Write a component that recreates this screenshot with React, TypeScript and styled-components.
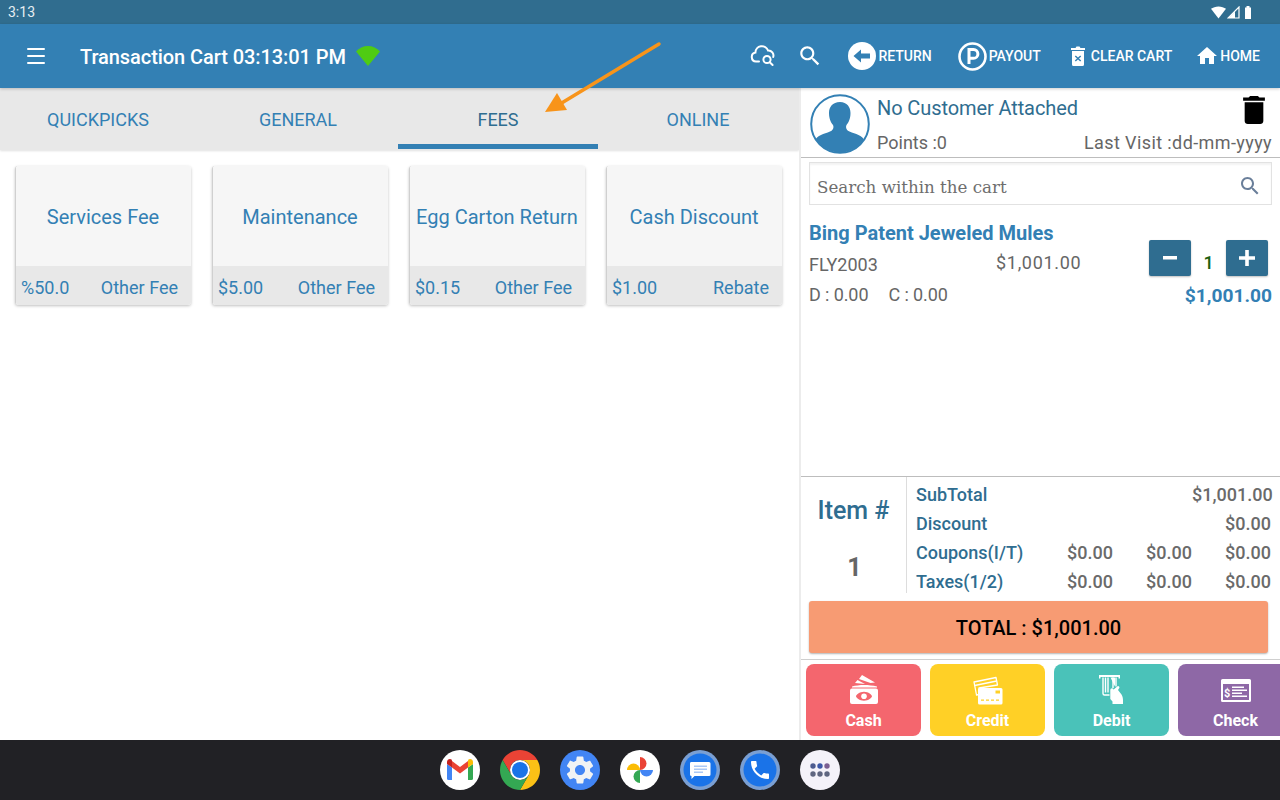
import React from 'react';
import styled, { createGlobalStyle } from 'styled-components';
import { Menu } from 'lucide-react';

const Global = createGlobalStyle`
  html, body { margin: 0; padding: 0; background: #fff; }
  * { box-sizing: border-box; }
  body { font-family: Roboto, "Liberation Sans", sans-serif; }
`;

const BLUE = '#3380b4';
const DEEP = '#2f6d90';
const GREY = '#666666';

const Screen = styled.div`
  position: relative;
  width: 1280px;
  height: 800px;
  display: flex;
  flex-direction: column;
  overflow: hidden;
`;
const StatusBar = styled.div`
  height: 24px;
  background: #306d8f;
  color: #e6edf2;
  font-size: 14px;
  display: flex;
  align-items: center;
  justify-content: space-between;
  padding: 0 25px 0 8px;
`;
const StatusIcons = styled.div`
  display: flex;
  align-items: center;
  gap: 1px;
`;
const Header = styled.header`
  height: 64px;
  background: ${BLUE};
  color: #fff;
  display: flex;
  align-items: center;
  padding: 0 20px 0 24px;
  box-shadow: 0 1px 3px rgba(0,0,0,.2);
  z-index: 2;
`;
const Title = styled.div`
  margin-left: 32px;
  font-size: 20px;
  letter-spacing: -0.07px;
  font-weight: 500;
  display: flex;
  align-items: center;
  gap: 9px;
  flex: 1;
  padding-top: 2px;
`;
const WifiMark = styled.svg`
  margin-top: -2px;
`;
const Actions = styled.div`
  display: flex;
  align-items: center;
`;
const Action = styled.div<{ $ml: number; $gap?: number }>`
  display: flex;
  align-items: center;
  gap: ${p => p.$gap ?? 2}px;
  margin-left: ${p => p.$ml}px;
  font-size: 14px;
  font-weight: 500;
`;
const Body = styled.div`
  flex: 1;
  display: flex;
  min-height: 0;
`;
const LeftPane = styled.section`
  width: 799px;
  flex: none;
`;
const Tabs = styled.nav`
  height: 62px;
  background: #e8e8e8;
  display: flex;
  box-shadow: 0 1px 2px rgba(0,0,0,.12);
  overflow: hidden;
`;
const Tab = styled.div<{ $active?: boolean }>`
  width: 200px;
  flex: none;
  display: flex;
  align-items: center;
  justify-content: center;
  height: 61px;
  padding-top: 6px;
  font-size: 18px;
  color: ${p => (p.$active ? DEEP : BLUE)};
  border-bottom: 5px solid ${p => (p.$active ? BLUE : 'transparent')};
  &:first-child { margin-left: -2px; }
`;
const CardGrid = styled.div`
  display: grid;
  grid-template-columns: repeat(4, 176px);
  gap: 21px;
  padding: 16px 0 0 15px;
`;
const Card = styled.article`
  height: 139px;
  border-radius: 3px;
  overflow: hidden;
  border-left: 1px solid #d0d0d0;
  box-shadow: 0 1px 3px rgba(0,0,0,.25);
  display: flex;
  flex-direction: column;
  color: ${BLUE};
`;
const CardName = styled.div`
  height: 100px;
  background: #f6f6f6;
  display: flex;
  align-items: center;
  justify-content: center;
  font-size: 20px;
  padding: 2px 1px 0 0;
`;
const CardFoot = styled.div`
  flex: 1;
  background: #e8e8e8;
  display: flex;
  align-items: center;
  justify-content: space-between;
  padding: 3px 13px 0 5px;
  font-size: 18px;
`;
const RightPane = styled.section`
  flex: 1;
  min-width: 0;
  border-left: 2px solid #ececec;
  display: flex;
  flex-direction: column;
`;
const Customer = styled.div`
  height: 70px;
  border-bottom: 1px solid #bdbdbd;
  display: flex;
  padding: 6px 8px 0 9px;
  gap: 7px;
`;
const CustomerInfo = styled.div`
  flex: 1;
  display: flex;
  flex-direction: column;
`;
const CustomerTop = styled.div`
  display: flex;
  justify-content: space-between;
  align-items: flex-start;
  color: ${DEEP};
  font-size: 20px;
  letter-spacing: -0.1px;
  height: 37px;
  line-height: 28px;
  padding-right: 6px;
`;
const CustomerBottom = styled.div`
  display: flex;
  justify-content: space-between;
  color: ${GREY};
  font-size: 18px;
  line-height: 24px;
`;
const LastVisit = styled.span`
  letter-spacing: 0.4px;
`;
const TrashMark = styled.svg`
  margin-top: 2px;
`;
const SearchBox = styled.div`
  margin: 4px 8px 0 8px;
  height: 43px;
  border: 1px solid #e2e2e2;
  box-shadow: inset 0 2px 2px rgba(0,0,0,.05);
  display: flex;
  align-items: center;
  justify-content: space-between;
  padding: 4px 9px 0 7px;
  color: #6e6e6e;
  font-family: "DejaVu Serif", serif;
  font-size: 16.7px;
`;
const SearchLabel = styled.span`
  padding-top: 2px;
`;
const Line = styled.div`
  position: relative;
  margin: 15px 8px 0 8px;
  height: 91px;
  display: grid;
  grid-template-columns: 340px 1fr;
`;
const LineMain = styled.div`
  display: flex;
  flex-direction: column;
`;
const LineName = styled.div`
  color: ${BLUE};
  font-size: 20px;
  font-weight: 700;
  line-height: 26px;
  white-space: nowrap;
`;
const LineCode = styled.div`
  display: grid;
  grid-template-columns: 187px auto;
  font-size: 18px;
  color: ${GREY};
  line-height: 24px;
  margin-top: 7px;
`;
const LinePrice = styled.span`
  margin-top: -2px;
  letter-spacing: 0.7px;
`;
const LineAdj = styled.div`
  display: flex;
  gap: 20px;
  font-size: 18px;
  letter-spacing: -0.1px;
  color: ${GREY};
  line-height: 24px;
  margin-top: 6px;
`;
const LineSide = styled.div`
  display: flex;
  flex-direction: column;
  align-items: flex-end;
  padding-top: 20px;
`;
const Stepper = styled.div`
  display: flex;
  align-items: center;
  padding-right: 4px;
`;
const StepButton = styled.div`
  width: 42px;
  height: 36px;
  border-radius: 2px;
  background: ${DEEP};
  color: #fff;
  display: flex;
  align-items: center;
  justify-content: center;
  box-shadow: 0 1px 2px rgba(0,0,0,.25);
`;
const Qty = styled.span`
  width: 35px;
  text-align: center;
  color: #1a6010;
  font-size: 18px;
  font-weight: 500;
  padding-top: 8px;
`;
const LineTotal = styled.div`
  color: ${BLUE};
  font-size: 19.2px;
  font-weight: 700;
  line-height: 24px;
  margin-top: 8px;
`;
const Spacer = styled.div`
  flex: 1;
`;
const Totals = styled.div`
  height: 118px;
  border-top: 1px solid #bdbdbd;
  display: flex;
`;
const ItemCount = styled.div`
  width: 106px;
  height: 116px;
  flex: none;
  border-right: 1px solid #dddddd;
  display: flex;
  flex-direction: column;
  align-items: center;
  font-weight: 500;
`;
const ItemLabel = styled.div`
  color: ${DEEP};
  font-size: 25px;
  margin-top: 19px;
  line-height: 30px;
`;
const ItemValue = styled.div`
  color: ${GREY};
  font-size: 25px;
  font-weight: 700;
  margin: 27px 0 0 2px;
  line-height: 30px;
`;
const TotalRows = styled.div`
  flex: 1;
  padding: 3px 9px 0 9px;
`;
const TotalRow = styled.div`
  height: 29px;
  display: grid;
  grid-template-columns: 1fr 79px 79px 79px;
  align-items: center;
  font-size: 18px;
  font-weight: 500;
  color: #6a6a6a;
  text-align: right;
`;
const TotalLabel = styled.span`
  color: ${DEEP};
  text-align: left;
  white-space: nowrap;
`;
const TotalButton = styled.div`
  margin: 7px 12px 0 8px;
  height: 52px;
  padding-top: 2px;
  background: #f79b73;
  border-radius: 3px;
  box-shadow: 0 1px 2px rgba(0,0,0,.3);
  color: #000;
  font-size: 20px;
  font-weight: 500;
  display: flex;
  align-items: center;
  justify-content: center;
`;
const PayRow = styled.div`
  margin-top: 6px;
  border-top: 1px solid #cfcfcf;
  display: flex;
  gap: 9px;
  padding: 4px 0 4px 5px;
  overflow: hidden;
`;
const PayButton = styled.div<{ $bg: string }>`
  width: 115px;
  height: 72px;
  flex: none;
  border-radius: 8px;
  background: ${p => p.$bg};
  color: #fff;
  font-size: 16px;
  font-weight: 700;
  line-height: 20px;
  display: flex;
  flex-direction: column;
  align-items: center;
  padding-top: 10px;
  gap: 5px;
`;
const PayIcon = styled.div`
  height: 32px;
  display: flex;
  align-items: center;
  justify-content: center;
`;
const Dock = styled.footer`
  height: 60px;
  background: #212125;
  display: flex;
  align-items: center;
  justify-content: center;
  gap: 20px;
`;
const Arrow = styled.svg`
  position: absolute;
  left: 540px;
  top: 38px;
  z-index: 5;
`;

const cards = [
  ['Services Fee', '%50.0', 'Other Fee'],
  ['Maintenance', '$5.00', 'Other Fee'],
  ['Egg Carton Return', '$0.15', 'Other Fee'],
  ['Cash Discount', '$1.00', 'Rebate'],
];

const HOME = 'M10 20v-6h4v6h5v-8h3L12 3 2 12h3v8z';
const SEARCH = 'M15.5 14h-.79l-.28-.27C15.41 12.59 16 11.11 16 9.5 16 5.91 13.09 3 9.5 3S3 5.91 3 9.5 5.91 16 9.5 16c1.61 0 3.09-.59 4.23-1.57l.27.28v.79l5 4.99L20.49 19l-4.99-5zm-6 0C7.01 14 5 11.99 5 9.5S7.01 5 9.5 5 14 7.01 14 9.5 11.99 14 9.5 14z';
const GEAR = 'M19.14 12.94c.04-.3.06-.61.06-.94 0-.32-.02-.64-.07-.94l2.03-1.58c.18-.14.23-.41.12-.61l-1.92-3.32c-.12-.22-.37-.29-.59-.22l-2.39.96c-.5-.38-1.03-.7-1.62-.94l-.36-2.54c-.04-.24-.24-.41-.48-.41h-3.84c-.24 0-.43.17-.47.41l-.36 2.54c-.59.24-1.13.57-1.62.94l-2.39-.96c-.22-.08-.47 0-.59.22L2.74 8.87c-.12.21-.08.47.12.61l2.03 1.58c-.05.3-.09.63-.09.94s.02.64.07.94l-2.03 1.58c-.18.14-.23.41-.12.61l1.92 3.32c.12.22.37.29.59.22l2.39-.96c.5.38 1.03.7 1.62.94l.36 2.54c.05.24.24.41.48.41h3.84c.24 0 .44-.17.47-.41l.36-2.54c.59-.24 1.13-.56 1.62-.94l2.39.96c.22.08.47 0 .59-.22l1.92-3.32c.12-.22.07-.47-.12-.61l-2.01-1.58zM12 15.6c-1.98 0-3.6-1.62-3.6-3.6s1.62-3.6 3.6-3.6 3.6 1.62 3.6 3.6-1.62 3.6-3.6 3.6z';
const PHONE = 'M6.62 10.79c1.44 2.83 3.76 5.14 6.59 6.59l2.2-2.2c.27-.27.67-.36 1.02-.24 1.12.37 2.33.57 3.57.57.55 0 1 .45 1 1V20c0 .55-.45 1-1 1-9.39 0-17-7.61-17-17 0-.55.45-1 1-1h3.5c.55 0 1 .45 1 1 0 1.25.2 2.45.57 3.57.11.35.03.74-.25 1.02l-2.2 2.2z';

const SearchGlyph = ({ size, color }: { size: number; color: string }) => (
  <svg width={size} height={size} viewBox="0 0 24 24"><path d={SEARCH} fill={color} /></svg>
);
const CloudSearch = () => (
  <svg width="26" height="24" viewBox="0 0 26 24" fill="none" stroke="#fff" strokeWidth="2" strokeLinecap="round">
    <path d="M9 17.5H6a4.5 4.5 0 0 1-.6-8.9A6.5 6.5 0 0 1 18 6.5a5 5 0 0 1 5.2 6.5" />
    <circle cx="17" cy="15.5" r="3.6" />
    <path d="M19.7 18.2 22.6 21" />
  </svg>
);
const ReturnIcon = () => (
  <svg width="28" height="28" viewBox="0 0 28 28">
    <circle cx="14" cy="14" r="14" fill="#fff" />
    <path d="M5.5 14 13 7.5v4h9v5h-9v4z" fill={BLUE} />
  </svg>
);
const PayoutIcon = () => (
  <svg width="29" height="29" viewBox="0 0 29 29" fill="none">
    <circle cx="14.5" cy="14.5" r="13" stroke="#fff" strokeWidth="2.6" />
    <path d="M11 22V7.5h4.5a4.4 4.4 0 0 1 0 8.8H11" stroke="#fff" strokeWidth="3" />
  </svg>
);
const ClearIcon = () => (
  <svg width="14" height="20" viewBox="0 0 14 20">
    <path d="M0 2h4.5l1-1.5h3L9.5 2H14v2H0z" fill="#fff" />
    <path fillRule="evenodd" d="M1 5h12v13.5A1.5 1.5 0 0 1 11.5 20h-9A1.5 1.5 0 0 1 1 18.5zM4.8 9.5 3.8 10.5 6 12.5l-2.2 2 1 1 2.2-2 2.2 2 1-1-2.2-2 2.2-2-1-1-2.2 2z" fill="#fff" />
  </svg>
);
const Avatar = () => (
  <svg width="60" height="60" viewBox="0 0 60 60">
    <defs>
      <clipPath id="avatar-clip"><circle cx="30" cy="30" r="28.5" /></clipPath>
    </defs>
    <circle cx="30" cy="30" r="28.8" fill="#fff" stroke={BLUE} strokeWidth="2" />
    <g clipPath="url(#avatar-clip)" fill={BLUE}>
      <path d="M30 8c7 0 10.5 5 10.5 11 0 6-2 9.5-4 12-1 2-.5 5 3 6.5 6 2.5 13 3.5 15 9V60H5V46.5c2-5.5 9-6.5 15-9 3.500-1.500 4-4.500 3-6.500-2-2.500-4-6-4-12 0-6 3.500-11 11-11z" />
    </g>
  </svg>
);
const CashIcon = () => (
  <svg width="30" height="32" viewBox="0 0 30 32" fill="#fff">
    <path d="M10 5 13 1l13 7.5-4.500.5zM6 9l2.500-3 7.500 4z" />
    <path d="M3 12.500C10 10.500 20 10.500 28 12.500v1H3z" />
    <path fillRule="evenodd" d="M3 14.500h24a2 2 0 0 1 2 2V28a2 2 0 0 1-2 2H3a2 2 0 0 1-2-2V16.500a2 2 0 0 1 2-2zm12 3.200c-4.500 0-8 3-8 4.500s3.500 4.500 8 4.500 8-3 8-4.500-3.500-4.500-8-4.500z" />
    <circle cx="15" cy="22.200" r="2.800" />
  </svg>
);
const CreditIcon = () => (
  <svg width="30" height="32" viewBox="0 0 30 32" fill="none">
    <path d="M1 8 23 3.500l1.500 7.500L6 14v6.500L3.500 21z" stroke="#fff" strokeWidth="1.300" strokeLinejoin="round" />
    <path d="M1.700 11.500 23.700 7" stroke="#fff" strokeWidth="1.300" />
    <path fillRule="evenodd" d="M6.500 14H28a1.500 1.500 0 0 1 1.500 1.500V29a1.500 1.500 0 0 1-1.500 1.500H6.500A1.500 1.500 0 0 1 5 29V15.500A1.500 1.500 0 0 1 6.500 14zm16 2.500v3h4.500v-3zM8 25.500v1.200h3v-1.200zm5 0v1.200h3v-1.200zm5 0v1.200h3v-1.200zm5 0v1.200h3v-1.200z" fill="#fff" />
  </svg>
);
const DebitIcon = () => (
  <svg width="28" height="32" viewBox="0 0 28 32" fill="none">
    <path d="M1 1h21v3.500h-1.500V3H2.500v1.500H1z" fill="#fff" />
    <path d="M5 3.500v16a1.500 1.500 0 0 0 1.500 1.500h5M7.500 3.500v15M10 3.500v15M15 3.500V14M18 3.500v9" stroke="#fff" strokeWidth="1.400" />
    <path d="M12.500 3.500h4.500v9" fill="#fff" />
    <path d="M12.300 21.500V16a1.700 1.700 0 0 1 3.400 0v-.5l3.800-3.300a1.300 1.300 0 0 1 1.800 1.700l-1.300 2 3.500 4.600c1.200 2 1.500 4 1.500 6v3.500H14.500v-2.500L12.300 25z" fill="#fff" />
  </svg>
);
const CheckIcon = () => (
  <svg width="30" height="23" viewBox="0 0 30 23" fill="#fff">
    <path fillRule="evenodd" d="M1.500 0h27A1.500 1.500 0 0 1 30 1.500v20a1.500 1.500 0 0 1-1.500 1.500h-27A1.500 1.500 0 0 1 0 21.500v-20A1.500 1.500 0 0 1 1.500 0zM2 5v16h26V5z" />
    <text x="3" y="17.500" fontSize="11" fontWeight="700" fontFamily="Roboto, sans-serif" fill="#fff">$</text>
    <path d="M11 7.500h12v1.600H11zM11 10.500h15v1.600H11zM11 13.500h10v1.600H11zM11 16.500h15v1.600H11z" />
  </svg>
);

const Gmail = () => (
  <svg width="40" height="40" viewBox="0 0 40 40">
    <circle cx="20" cy="20" r="20" fill="#fff" />
    <path d="M7 14v14.500A1.500 1.500 0 0 0 8.500 30H12V17.500z" fill="#4285f4" />
    <path d="M33 14v14.500a1.500 1.500 0 0 1-1.500 1.500H28V17.500z" fill="#34a853" />
    <path d="M12 17.500 20 23.500l8-6V11l-8 6-8-6z" fill="#ea4335" />
    <path d="M28 11v6.500l5-3.500v-2c0-2.500-2.800-3.800-4.800-2.300z" fill="#fbbc04" />
    <path d="M12 11v6.500L7 14v-2c0-2.500 2.800-3.800 4.800-2.300z" fill="#c5221f" />
  </svg>
);
const Chrome = () => (
  <svg width="40" height="40" viewBox="0 0 40 40">
    <path d="M2.680 10A20 20 0 0 1 37.320 10L20 10A10 10 0 0 0 11.340 25z" fill="#ea4335" />
    <path d="M37.320 10A20 20 0 0 1 20 40L28.660 25A10 10 0 0 0 20 10z" fill="#fbc116" />
    <path d="M20 40A20 20 0 0 1 2.680 10L11.340 25A10 10 0 0 0 28.660 25z" fill="#34a853" />
    <circle cx="20" cy="20" r="10" fill="#fff" />
    <circle cx="20" cy="20" r="8" fill="#1a73e8" />
  </svg>
);
const Settings = () => (
  <svg width="40" height="40" viewBox="0 0 40 40">
    <circle cx="20" cy="20" r="20" fill="#4285f4" />
    <g transform="translate(3.200 3.200) scale(1.400)">
      <path d={GEAR} fill="#f1f3f4" />
    </g>
  </svg>
);
const Photos = () => (
  <svg width="40" height="40" viewBox="0 0 40 40">
    <circle cx="20" cy="20" r="20" fill="#fff" />
    <path d="M20 20V7a6.500 6.500 0 0 1 0 13z" fill="#ea4335" />
    <path d="M20 20h13a6.500 6.500 0 0 1-13 0z" fill="#4285f4" />
    <path d="M20 20v13a6.500 6.500 0 0 1 0-13z" fill="#34a853" />
    <path d="M20 20H7a6.500 6.500 0 0 1 13 0z" fill="#fbbc04" />
  </svg>
);
const Messages = () => (
  <svg width="40" height="40" viewBox="0 0 40 40">
    <circle cx="20" cy="20" r="20" fill="#7a9fd3" />
    <circle cx="20" cy="20" r="16.500" fill="#1a73e8" />
    <path d="M11 12h18a1.500 1.500 0 0 1 1.500 1.500v11A1.500 1.500 0 0 1 29 26H14.500L11.500 29V26A1.500 1.500 0 0 1 10 24.500v-11A1.500 1.500 0 0 1 11 12z" fill="#fff" />
    <path d="M14 15.500h13v1.500H14zM14 18.500h13V20H14zM14 21.500h9V23h-9z" fill="#aac8f5" />
  </svg>
);
const Phone = () => (
  <svg width="40" height="40" viewBox="0 0 40 40">
    <circle cx="20" cy="20" r="20" fill="#7a9fd3" />
    <circle cx="20" cy="20" r="16.500" fill="#1a73e8" />
    <g transform="translate(8 8)"><path d={PHONE} fill="#fff" /></g>
  </svg>
);
const Apps = () => (
  <svg width="40" height="40" viewBox="0 0 40 40">
    <circle cx="20" cy="20" r="20" fill="#f4f2f9" />
    <circle cx="13" cy="16" r="2.700" fill="#4c5b8f" />
    <circle cx="20" cy="16" r="2.700" fill="#3c58a8" />
    <circle cx="27" cy="16" r="2.700" fill="#7b5f92" />
    <circle cx="13" cy="24" r="2.700" fill="#5f6680" />
    <circle cx="20" cy="24" r="2.700" fill="#5f6680" />
    <circle cx="27" cy="24" r="2.700" fill="#5f6680" />
  </svg>
);

export default function App() {
  return (
    <Screen>
      <Global />
      <StatusBar>
        <span>3:13</span>
        <StatusIcons>
          <svg width="15" height="13" viewBox="0 0 16 13"><path d="M0 2.500C2 1 5 0 8 0s6 1 8 2.500L8 13z" fill="#fff" /></svg>
          <svg width="13" height="13" viewBox="0 0 13 13"><path d="M12 1v11H1z" fill="none" stroke="#fff" strokeWidth="1.200" /><path d="M8 12V5.500L1.500 12z" fill="#fff" /></svg>
          <svg width="14" height="14" viewBox="0 0 14 14"><path d="M4 2.500h1.500V1h3v1.500H10V14H4z" fill="#fff" /></svg>
        </StatusIcons>
      </StatusBar>
      <Header>
        <Menu size={24} color="#fff" strokeWidth={2} />
        <Title>
          Transaction Cart 03:13:01 PM
          <WifiMark width="26" height="20" viewBox="0 0 26 20"><path d="M1 5.500C4 2 8.500 0 13 0s9 2 12 5.500L13 20z" fill="#4fcb13" /></WifiMark>
        </Title>
        <Actions>
          <Action $ml={0}><CloudSearch /></Action>
          <Action $ml={21}><SearchGlyph size={26} color="#fff" /></Action>
          <Action $ml={25}><ReturnIcon />RETURN</Action>
          <Action $ml={26}><PayoutIcon />PAYOUT</Action>
          <Action $ml={30} $gap={6}><ClearIcon />CLEAR CART</Action>
          <Action $ml={24}>
            <svg width="22" height="22" viewBox="1 2 22 20"><path d={HOME} fill="#fff" /></svg>
            HOME
          </Action>
        </Actions>
      </Header>
      <Body>
        <LeftPane>
          <Tabs>
            <Tab>QUICKPICKS</Tab>
            <Tab>GENERAL</Tab>
            <Tab $active>FEES</Tab>
            <Tab>ONLINE</Tab>
          </Tabs>
          <CardGrid>
            {cards.map(([name, price, kind]) => (
              <Card key={name}>
                <CardName>{name}</CardName>
                <CardFoot><span>{price}</span><span>{kind}</span></CardFoot>
              </Card>
            ))}
          </CardGrid>
        </LeftPane>
        <RightPane>
          <Customer>
            <Avatar />
            <CustomerInfo>
              <CustomerTop>
                No Customer Attached
                <TrashMark width="24" height="28" viewBox="5 3 14 18">
                  <path d="M6 19c0 1.100.9 2 2 2h8c1.100 0 2-.9 2-2V7H6v12zM19 4h-3.500l-1-1h-5l-1 1H5v2h14V4z" fill="#000" />
                </TrashMark>
              </CustomerTop>
              <CustomerBottom>
                <span>Points :0</span>
                <LastVisit>Last Visit :dd-mm-yyyy</LastVisit>
              </CustomerBottom>
            </CustomerInfo>
          </Customer>
          <SearchBox>
            <SearchLabel>Search within the cart</SearchLabel>
            <SearchGlyph size={24} color="#6a7f9a" />
          </SearchBox>
          <Line>
            <LineMain>
              <LineName>Bing Patent Jeweled Mules</LineName>
              <LineCode>
                <span>FLY2003</span>
                <LinePrice>$1,001.00</LinePrice>
              </LineCode>
              <LineAdj>
                <span>D : 0.00</span>
                <span>C : 0.00</span>
              </LineAdj>
            </LineMain>
            <LineSide>
              <Stepper>
                <StepButton>
                  <svg width="14" height="4" viewBox="0 0 14 4"><rect width="14" height="3.500" fill="#fff" /></svg>
                </StepButton>
                <Qty>1</Qty>
                <StepButton>
                  <svg width="16" height="16" viewBox="0 0 16 16"><path d="M6.200 0h3.600v6.200H16v3.600H9.800V16H6.200V9.800H0V6.200h6.200z" fill="#fff" /></svg>
                </StepButton>
              </Stepper>
              <LineTotal>$1,001.00</LineTotal>
            </LineSide>
          </Line>
          <Spacer />
          <Totals>
            <ItemCount>
              <ItemLabel>Item #</ItemLabel>
              <ItemValue>1</ItemValue>
            </ItemCount>
            <TotalRows>
              <TotalRow><TotalLabel>SubTotal</TotalLabel><span /><span /><span>$1,001.00</span></TotalRow>
              <TotalRow><TotalLabel>Discount</TotalLabel><span /><span /><span>$0.00</span></TotalRow>
              <TotalRow><TotalLabel>Coupons(I/T)</TotalLabel><span>$0.00</span><span>$0.00</span><span>$0.00</span></TotalRow>
              <TotalRow><TotalLabel>Taxes(1/2)</TotalLabel><span>$0.00</span><span>$0.00</span><span>$0.00</span></TotalRow>
            </TotalRows>
          </Totals>
          <TotalButton>TOTAL : $1,001.00</TotalButton>
          <PayRow>
            <PayButton $bg="#f4666e"><PayIcon><CashIcon /></PayIcon>Cash</PayButton>
            <PayButton $bg="#ffd026"><PayIcon><CreditIcon /></PayIcon>Credit</PayButton>
            <PayButton $bg="#4ac2b9"><PayIcon><DebitIcon /></PayIcon>Debit</PayButton>
            <PayButton $bg="#8e68a6"><PayIcon><CheckIcon /></PayIcon>Check</PayButton>
          </PayRow>
        </RightPane>
      </Body>
      <Dock>
        <Gmail /><Chrome /><Settings /><Photos /><Messages /><Phone /><Apps />
      </Dock>
      <Arrow width="130" height="80" viewBox="0 0 130 80">
        <path d="M119 6 20 66" stroke="#f8941a" strokeWidth="3.500" strokeLinecap="round" />
        <path d="M5 74 27 72 17 55z" fill="#f8941a" />
      </Arrow>
    </Screen>
  );
}
